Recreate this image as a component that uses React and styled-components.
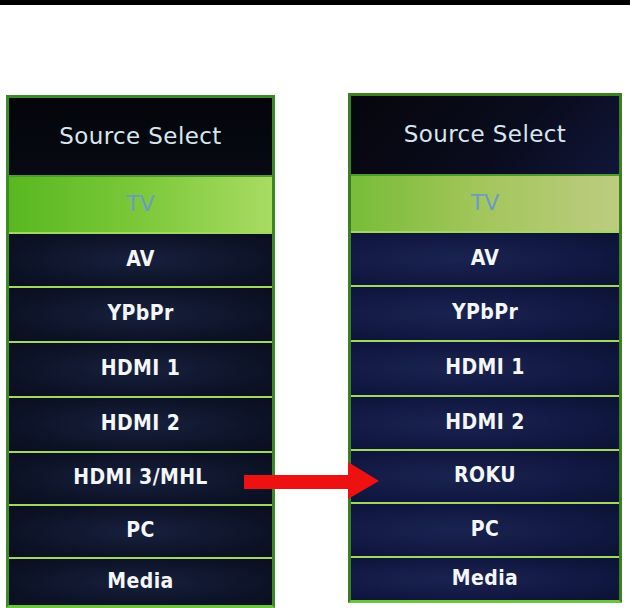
import styled, { createGlobalStyle } from "styled-components";

const GlobalStyle = createGlobalStyle`
  html, body {
    margin: 0;
    padding: 0;
    background: #ffffff;
  }
  body {
    font-family: "DejaVu Sans", Verdana, sans-serif;
  }
`;

const Page = styled.div`
  position: relative;
  width: 630px;
  height: 608px;
  overflow: hidden;
  background: #ffffff;
`;

const TopBar = styled.div`
  height: 5px;
  background: #000000;
`;

const Panels = styled.div`
  display: flex;
  align-items: flex-start;
  gap: 73px;
  padding-left: 6px;
`;

const Panel = styled.div`
  width: ${(p) => p.$width}px;
  margin-top: ${(p) => p.$top}px;
  border: 3px solid ${(p) => p.$frame};
  border-bottom-color: #6cc43c;
  display: flex;
  flex-direction: column;
  background: ${(p) => p.$bg};
`;

const Header = styled.div`
  height: ${(p) => p.$height}px;
  display: flex;
  align-items: center;
  justify-content: center;
  background: ${(p) => p.$bg};
  color: #d6e6ee;
  font-size: 23px;
  letter-spacing: 0.4px;
  padding-bottom: 2px;
  box-sizing: border-box;
`;

/* height given is the row body; the 2px separator sits on top of it */
const Row = styled.div`
  height: ${(p) => p.$height + 2}px;
  display: flex;
  align-items: center;
  justify-content: center;
  border-top: 2px solid #a2d862;
  background: ${(p) => p.$bg};
  color: #f4f6f8;
  font-family: "DejaVu Sans Condensed", "DejaVu Sans", sans-serif;
  font-weight: bold;
  font-size: 21px;
  letter-spacing: 0.4px;
  padding-bottom: 3px;
  box-sizing: border-box;
`;

const ActiveRow = styled(Row)`
  border-top-color: #4e9a30;
  color: #6b9cc6;
  font-family: "DejaVu Sans", sans-serif;
  font-weight: normal;
  font-size: 22px;
  letter-spacing: 0;
`;

const Arrow = styled.svg`
  position: absolute;
  left: 244px;
  top: 462px;
`;

const leftRows = [
  { label: "AV", h: 52 },
  { label: "YPbPr", h: 53 },
  { label: "HDMI 1", h: 53 },
  { label: "HDMI 2", h: 53 },
  { label: "HDMI 3/MHL", h: 51 },
  { label: "PC", h: 51 },
  { label: "Media", h: 46 },
];

const rightRows = [
  { label: "AV", h: 52 },
  { label: "YPbPr", h: 53 },
  { label: "HDMI 1", h: 53 },
  { label: "HDMI 2", h: 52 },
  { label: "ROKU", h: 51 },
  { label: "PC", h: 52 },
  { label: "Media", h: 42 },
];

const leftRowBg =
  "radial-gradient(ellipse at 50% 50%, #17203e 0%, #0c1226 70%, #0a0e1e 100%)";
const rightRowBg =
  "radial-gradient(ellipse at 40% 50%, #1a2350 0%, #111842 60%, #0c1232 100%)";

const SourceMenu = ({ width, top, frame, headerH, tvH, tvBg, headerBg, rowBg, rows }) => (
  <Panel $width={width} $top={top} $frame={frame} $bg={rowBg}>
    <Header $height={headerH} $bg={headerBg}>
      Source Select
    </Header>
    <ActiveRow $height={tvH} $bg={tvBg}>
      TV
    </ActiveRow>
    {rows.map((r) => (
      <Row key={r.label} $height={r.h} $bg={rowBg}>
        {r.label}
      </Row>
    ))}
  </Panel>
);

export default function App() {
  return (
    <Page>
      <GlobalStyle />
      <TopBar />
      <Panels>
        <SourceMenu
          width={263}
          top={90}
          frame="#3c8a26"
          headerH={77}
          tvH={55}
          headerBg="linear-gradient(180deg, #04050a 0%, #070a14 100%)"
          tvBg="linear-gradient(90deg, #58b820 0%, #7cc83a 50%, #a8dc62 100%)"
          rowBg={leftRowBg}
          rows={leftRows}
        />
        <SourceMenu
          width={268}
          top={88}
          frame="#3c7e22"
          headerH={78}
          tvH={55}
          headerBg="linear-gradient(135deg, #06060c 0%, #0a0c1e 60%, #10163a 100%)"
          tvBg="linear-gradient(90deg, #78bc38 0%, #a4c65c 50%, #bccc80 100%)"
          rowBg={rightRowBg}
          rows={rightRows}
        />
      </Panels>
      <Arrow width="136" height="38" viewBox="0 0 136 38">
        <polygon points="0,13 104,13 104,0 135,19 104,37 104,27 0,27" fill="#ee1111" />
      </Arrow>
    </Page>
  );
}
